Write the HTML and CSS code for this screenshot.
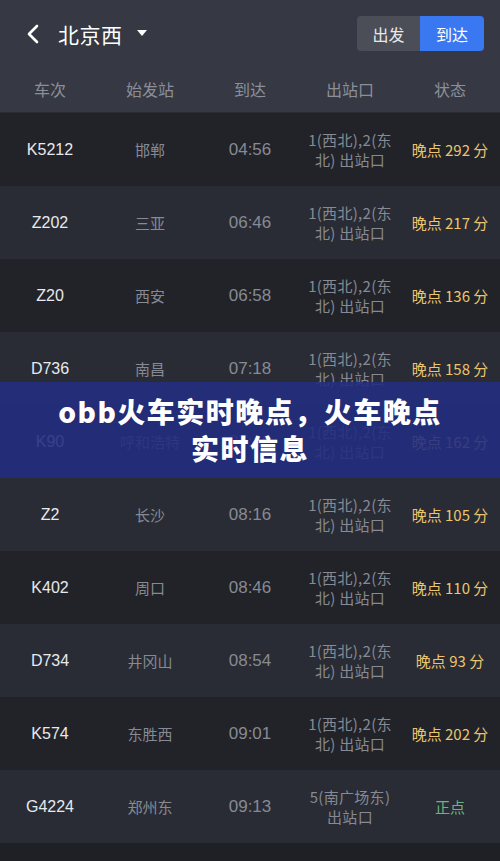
FILE: index.html
```html
<!DOCTYPE html>
<html lang="zh-CN">
<head>
<meta charset="utf-8">
<link rel="stylesheet" href="styles.css">
</head>
<body>
<div class="page">
  <header class="header">
    <div class="topbar">
      <svg class="back" width="14" height="20" viewBox="0 0 14 20"><path d="M11 2 L3 10 L11 18" fill="none" stroke="#fff" stroke-width="2.6" stroke-linecap="round" stroke-linejoin="round"/></svg>
      <span class="title">北京西</span>
      <svg class="caret" width="10" height="6" viewBox="0 0 10 6"><path d="M0 0 H10 L5 6 Z" fill="#fff"/></svg>
      <div class="seg">
        <span class="seg-item">出发</span>
        <span class="seg-item active">到达</span>
      </div>
    </div>
    <div class="cols">
      <span>车次</span><span>始发站</span><span>到达</span><span>出站口</span><span>状态</span>
    </div>
  </header>
  <div class="list">
    <div class="row odd"><span class="no">K5212</span><span class="st">邯郸</span><span class="tm">04:56</span><span class="ex">1(西北),2(东<br>北) 出站口</span><span class="late">晚点 292 分</span></div>
    <div class="row even"><span class="no">Z202</span><span class="st">三亚</span><span class="tm">06:46</span><span class="ex">1(西北),2(东<br>北) 出站口</span><span class="late">晚点 217 分</span></div>
    <div class="row odd"><span class="no">Z20</span><span class="st">西安</span><span class="tm">06:58</span><span class="ex">1(西北),2(东<br>北) 出站口</span><span class="late">晚点 136 分</span></div>
    <div class="row even"><span class="no">D736</span><span class="st">南昌</span><span class="tm">07:18</span><span class="ex">1(西北),2(东<br>北) 出站口</span><span class="late">晚点 158 分</span></div>
    <div class="row odd"><span class="no">K90</span><span class="st">呼和浩特</span><span class="tm">07:48</span><span class="ex">1(西北),2(东<br>北) 出站口</span><span class="late">晚点 162 分</span></div>
    <div class="row even"><span class="no">Z2</span><span class="st">长沙</span><span class="tm">08:16</span><span class="ex">1(西北),2(东<br>北) 出站口</span><span class="late">晚点 105 分</span></div>
    <div class="row odd"><span class="no">K402</span><span class="st">周口</span><span class="tm">08:46</span><span class="ex">1(西北),2(东<br>北) 出站口</span><span class="late">晚点 110 分</span></div>
    <div class="row even"><span class="no">D734</span><span class="st">井冈山</span><span class="tm">08:54</span><span class="ex">1(西北),2(东<br>北) 出站口</span><span class="late">晚点 93 分</span></div>
    <div class="row odd"><span class="no">K574</span><span class="st">东胜西</span><span class="tm">09:01</span><span class="ex">1(西北),2(东<br>北) 出站口</span><span class="late">晚点 202 分</span></div>
    <div class="row even"><span class="no">G4224</span><span class="st">郑州东</span><span class="tm">09:13</span><span class="ex">5(南广场东)<br>出站口</span><span class="ontime">正点</span></div>
  </div>
  <div class="banner">
    <h1 class="banner-title">obb火车实时晚点，火车晚点<br>实时信息</h1>
  </div>
</div>
</body>
</html>
```
FILE: styles.css
```css
* { box-sizing: border-box; }
html, body { margin: 0; padding: 0; }
body {
  background: #1e2026;
  font-family: "Noto Sans CJK SC", "Noto Sans", sans-serif;
  width: 500px;
  height: 861px;
  overflow: hidden;
}
.page { position: relative; width: 500px; }
.header {
  background: #363943;
  border-bottom: 1px solid #2a2c33;
}
.topbar {
  height: 68px;
  display: flex;
  align-items: center;
  padding: 0 16px 0 26px;
}
.back { margin-top: -1px; }
.title {
  color: #fff;
  font-size: 21px;
  margin-left: 18px;
  letter-spacing: 0.5px;
}
.caret { margin-left: 14px; margin-top: -2px; }
.seg {
  margin-left: auto;
  display: flex;
  height: 35px;
  border-radius: 4px;
  overflow: hidden;
  margin-top: -1px;
}
.seg-item {
  width: 63px;
  display: flex;
  align-items: center;
  justify-content: center;
  font-size: 16px;
  color: #e8e8ea;
  background: #4b4e57;
}
.seg-item.active {
  width: 64px;
  background: #3a78f2;
  color: #fff;
}
.cols {
  height: 44px;
  display: grid;
  grid-template-columns: repeat(5, 100px);
  align-items: center;
  justify-items: center;
  color: #8c8f98;
  font-size: 16px;
  padding-bottom: 2px;
}
.row {
  height: 73px;
  display: grid;
  grid-template-columns: repeat(5, 100px);
  align-items: center;
  justify-items: center;
  text-align: center;
}
.row.odd { background: #212329; }
.row.even { background: #292c34; }
.no {
  color: #e8e9ec;
  font-family: "Liberation Sans", "Noto Sans", sans-serif;
  font-size: 16px;
}
.st {
  color: #878a93;
  font-size: 15px;
}
.tm {
  color: #878a93;
  font-family: "Liberation Sans", "Noto Sans", sans-serif;
  font-size: 17px;
}
.ex {
  color: #878a93;
  font-size: 15px;
  line-height: 20px;
  white-space: nowrap;
  letter-spacing: 0.3px;
}
.late {
  color: #ecc56e;
  font-size: 15px;
  white-space: nowrap;
}
.ontime {
  color: #69b57f;
  font-size: 15px;
}
.banner {
  position: absolute;
  left: 0;
  right: 0;
  top: 382px;
  height: 96px;
  background: rgba(36, 46, 128, 0.9);
  display: flex;
  align-items: center;
  justify-content: center;
}
.banner-title {
  margin: 0;
  color: #fff;
  font-size: 28px;
  font-weight: 900;
  line-height: 37px;
  text-align: center;
  letter-spacing: 1.5px;
}
```
